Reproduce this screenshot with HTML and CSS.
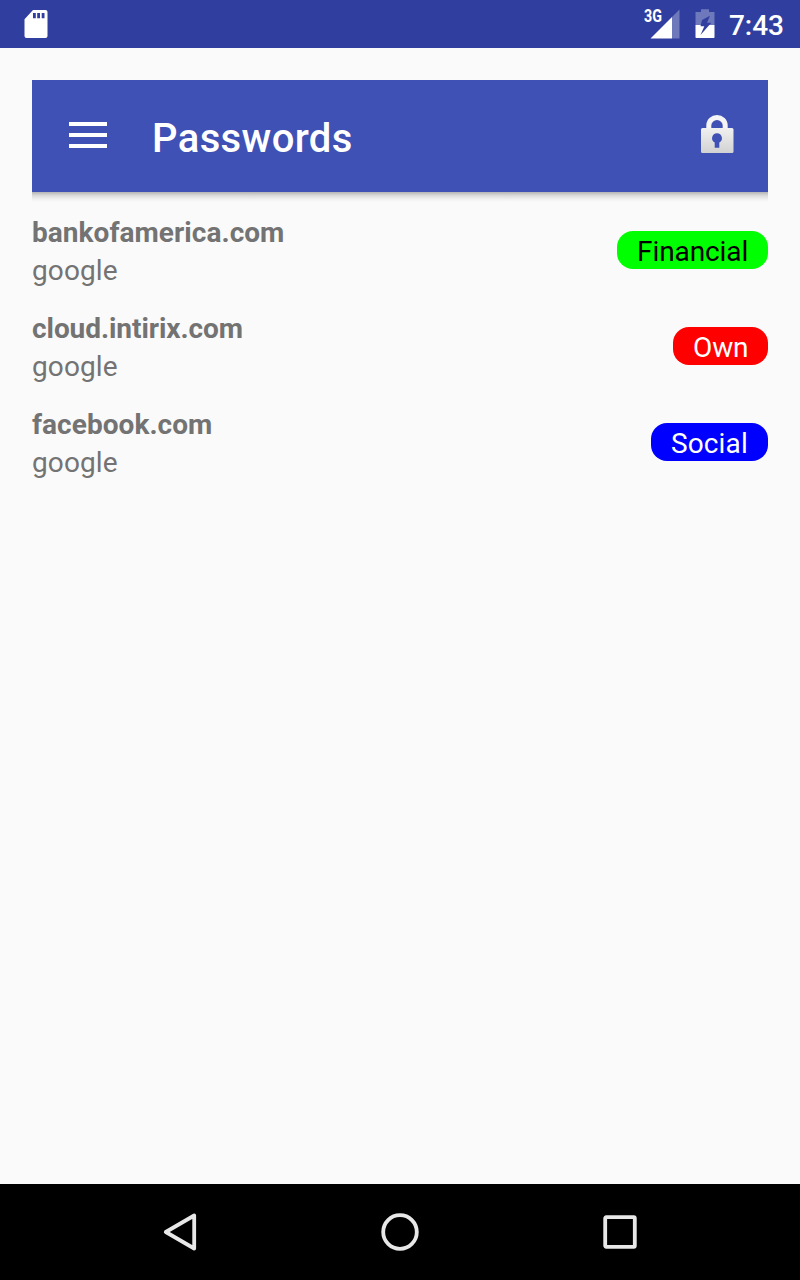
FILE: index.html
```html
<!DOCTYPE html>
<html lang="en">
<head>
<meta charset="utf-8">
<title>Passwords</title>
<link rel="stylesheet" href="styles.css">
</head>
<body>
<div class="screen">
  <header class="status">
    <svg class="sd" width="24" height="28" viewBox="0 0 24 28"><path fill="#fff" fill-rule="evenodd" d="M9 0H21.500a2 2 0 0 1 2 2V26a2 2 0 0 1-2 2H2.500a2 2 0 0 1-2-2V9.300ZM9 3V8.200H11.800V3ZM13.200 3V8.200H16V3ZM17.700 3V8.200H20.500V3Z"/></svg>
    <div class="indicators">
      <svg class="signal" width="36" height="39" viewBox="0 -8 36 39"><path fill="#fff" fill-opacity=".3" d="M28 9 35.500 1.500V30.500H28Z"/><path fill="#fff" d="M6.500 30.500 28 9V30.500Z"/><text class="network" x="0" y="14.200" textLength="18" lengthAdjust="spacingAndGlyphs">3G</text></svg>
      <svg class="battery" width="20" height="30" viewBox="0 0 20 30"><path fill="#fff" fill-opacity=".3" d="M6 1.200h8v2.800h5.500v13H.500V4H6Z"/><path fill="#fff" d="M.500 17h19V29.300q0 .7-.7.700H1.200q-.7 0-.7-.7Z"/><path fill="#303f9f" d="M15 7.800 7 12 5.500 18.300H9.300L5.500 27 16.300 14.800H12Z"/></svg>
      <span class="clock">7:43</span>
    </div>
  </header>
  <main class="content">
    <div class="toolbar">
      <svg class="menu" width="38" height="26" viewBox="0 0 38 26"><path fill="#fff" d="M0 0H38V4H0ZM0 11H38V15H0ZM0 22H38V26H0Z"/></svg>
      <h1 class="title">Passwords</h1>
      <svg class="lock" width="34" height="40" viewBox="0 0 34 40">
        <defs><linearGradient id="body" x1="0" y1="0" x2="0" y2="1"><stop offset="0" stop-color="#f0f0f0"/><stop offset="1" stop-color="#d2d2d2"/></linearGradient></defs>
        <path fill="none" stroke="#f5f5f5" stroke-width="5" d="M8.800 15V11.500a8.200 8 0 0 1 16.400 0V15"/>
        <rect x="1" y="14" width="32.500" height="25" rx="1.500" fill="url(#body)"/>
        <path fill="#3f51b5" d="M17 19.200a5 5 0 0 1 2.300 9.400V33.800H14.700V28.600a5 5 0 0 1 2.300-9.400Z"/>
      </svg>
    </div>
    <div class="shadow"></div>
    <ul class="list">
      <li class="row"><div class="entry"><div class="site">bankofamerica.com</div><div class="user">google</div></div><span class="tag financial">Financial</span></li>
      <li class="row"><div class="entry"><div class="site cloud">cloud.intirix.com</div><div class="user">google</div></div><span class="tag own">Own</span></li>
      <li class="row"><div class="entry"><div class="site">facebook.com</div><div class="user">google</div></div><span class="tag social">Social</span></li>
    </ul>
  </main>
  <nav class="navbar">
    <svg width="40" height="40" viewBox="0 0 40 40"><path class="outline" d="M34.200 3.500V36.500L5.800 20Z"/></svg>
    <svg width="40" height="40" viewBox="0 0 40 40"><circle class="outline" cx="20" cy="20" r="16.800"/></svg>
    <svg width="40" height="40" viewBox="0 0 40 40"><rect class="outline" x="5.200" y="5.200" width="29.600" height="29.600" rx="1"/></svg>
  </nav>
</div>
</body>
</html>
```
FILE: styles.css
```css
* { box-sizing: border-box; }

body {
  margin: 0;
  font-family: Roboto, "Liberation Sans", sans-serif;
  background: #fafafa;
}

.screen {
  display: flex;
  flex-direction: column;
  width: 800px;
  height: 1280px;
}

.status {
  display: flex;
  justify-content: space-between;
  height: 48px;
  padding: 0 16px 0 24px;
  background: #303f9f;
}

.sd { margin-top: 10px; }

.indicators { display: flex; }

.network {
  font-size: 17.5px;
  font-weight: 700;
  fill: #fff;
}

.battery { margin: 8px 14px 0 15px; }

.clock {
  color: #fff;
  font-size: 28px;
  font-weight: 500;
  line-height: 52px;
}

.content {
  flex: 1;
  padding: 32px 32px 0;
}

.toolbar {
  display: flex;
  align-items: center;
  height: 112px;
  padding: 0 34px 0 37px;
  background: #3f51b5;
}

.menu { margin-bottom: 2px; }

.title {
  flex: 1;
  margin: 6px 0 0 45px;
  color: #fff;
  font-size: 40px;
  font-weight: 500;
  line-height: 48px;
  letter-spacing: 0.38px;
}

.lock { margin-bottom: 4px; }

.shadow {
  height: 10px;
  background: linear-gradient(#b4b4b4, #dadada 35%, #f0f0f0 70%, #fafafa);
}

.list {
  display: flex;
  flex-direction: column;
  gap: 20px;
  margin: 10px 0 0;
  padding: 0;
  list-style: none;
}

.row {
  display: flex;
  align-items: center;
  justify-content: space-between;
  color: #737373;
  font-size: 28px;
  line-height: 36px;
}

.site, .user {
  height: 38px;
  padding-top: 3px;
}

.site {
  font-weight: 700;
  letter-spacing: 0.05px;
}

.cloud { letter-spacing: -0.06px; }

.user { letter-spacing: 0.12px; }

.tag {
  height: 38px;
  padding: 3px 0 0 20px;
  border-radius: 16px;
  color: #fff;
}

.financial { width: 151px; background: #0f0; color: #000; letter-spacing: -0.08px; }
.own { width: 95px; background: #f00; letter-spacing: -0.1px; }
.social { width: 117px; background: #00f; letter-spacing: 0.12px; }

.navbar {
  display: flex;
  justify-content: space-between;
  align-items: center;
  height: 96px;
  padding: 0 160px;
  background: #000;
}

.outline {
  fill: none;
  stroke: #e8e8e8;
  stroke-width: 3.8;
  stroke-linejoin: round;
}
```
